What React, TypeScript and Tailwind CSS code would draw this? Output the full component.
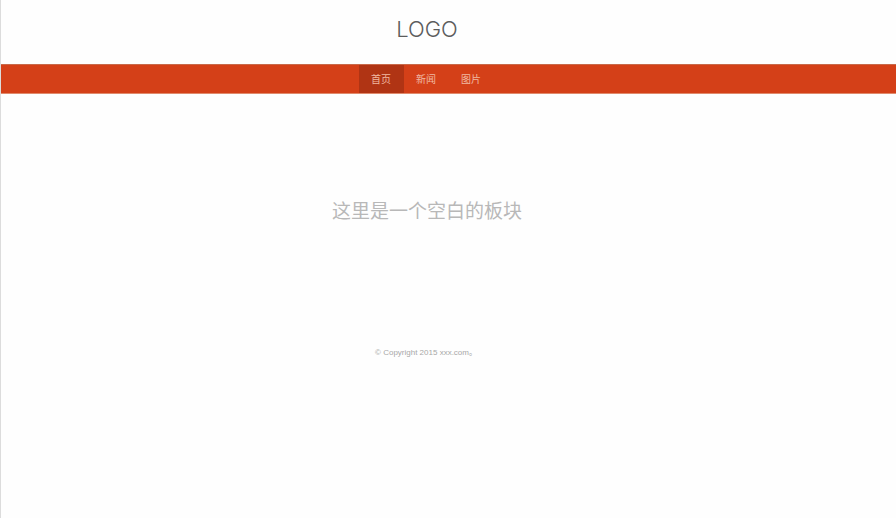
const links = ["首页", "新闻", "图片"];

export default function App() {
  return (
    <div className="min-h-screen border-l border-[#dcdcdc] bg-[#fefefe] pr-[43px] font-['Liberation_Sans','Noto_Sans_CJK_SC',sans-serif]">
      <header>
        <h1 className="flex h-16 items-center justify-center pb-1.5 font-['Inter','Liberation_Sans',sans-serif] text-[22px] font-light text-[#5c5c5c]">LOGO</h1>
        <nav className="-mr-[43px] border-y border-t-[#c8694a] border-b-[#e08a6c] bg-[#d44018] pr-[43px]">
          <ul className="flex justify-center pr-0.5">
            {links.map((label, i) => (
              <li key={label}>
                <a
                  href="#"
                  aria-current={i === 0 ? "page" : undefined}
                  className={`flex h-7 w-[45px] items-center justify-center pt-px text-[10px] text-[#f0b8a2] ${i === 0 ? "bg-[#b03414]" : ""}`}
                >
                  {label}
                </a>
              </li>
            ))}
          </ul>
        </nav>
      </header>
      <main className="flex h-[236px] items-center justify-center text-[19px] text-[#b8b8b8]">
        <p>这里是一个空白的板块</p>
      </main>
      <footer className="pt-4 pr-0.5 text-center text-[8px] leading-[14px] text-[#a8a8a8]">© Copyright 2015 xxx.com。</footer>
    </div>
  );
}
